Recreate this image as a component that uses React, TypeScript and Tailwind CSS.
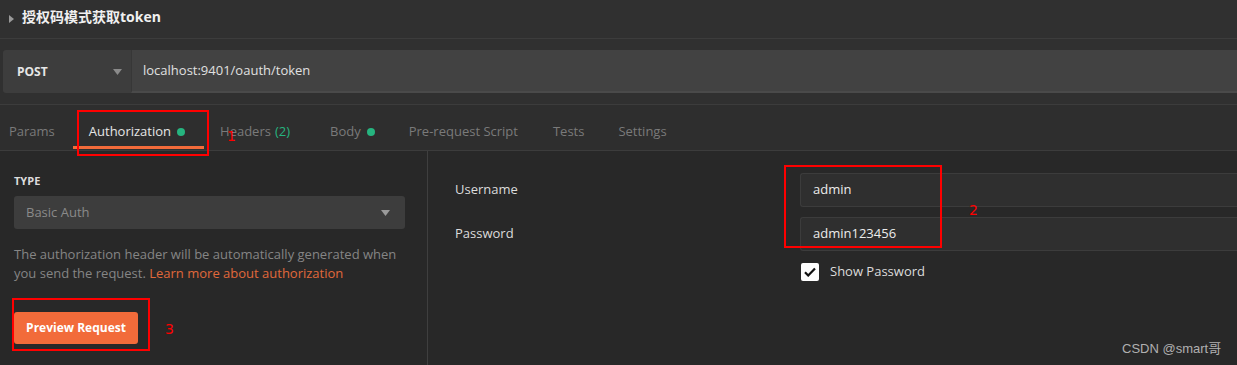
import React from "react";

const font = { fontFamily: '"Open Sans", "Noto Sans CJK SC", sans-serif' };
const markFont = { fontFamily: '"DejaVu Sans", sans-serif' };

function Caret({ className = "" }: { className?: string }) {
  return (
    <svg width="9" height="6" viewBox="0 0 9 6" className={className}>
      <path d="M0 0h9L4.5 6z" fill="currentColor" />
    </svg>
  );
}

function Tab({ label, active, dot, count }: { label: string; active?: boolean; dot?: boolean; count?: string }) {
  return (
    <div className="relative flex h-full items-center">
      <span className={active ? "text-[#e6e6e6]" : "text-[#7a7a7a]"}>{label}</span>
      {count && <span className="ml-1 text-[#26b47f]">{count}</span>}
      {dot && <span className="ml-[6px] h-[8px] w-[8px] rounded-full bg-[#26b47f]" />}
      {active && <div className="absolute -left-[16px] -right-[19px] bottom-[1px] h-[3px] bg-[#f26b3a]" />}
    </div>
  );
}

export default function App() {
  return (
    <div className="relative h-[365px] w-[1237px] overflow-hidden bg-[#282828] text-[13px]" style={font}>
      {/* title */}
      <div className="flex h-[39px] items-center border-b border-[#3c3c3c] bg-[#303030] pl-[9px]">
        <svg width="5" height="8" viewBox="0 0 5 8" className="mr-[8px] text-[#9a9a9a]">
          <path d="M0 0l5 4-5 4z" fill="currentColor" />
        </svg>
        <span className="pb-[6px] text-[14px] font-bold text-[#f0f0f0]">授权码模式获取token</span>
      </div>

      {/* request bar */}
      <div className="border-b border-[#3c3c3c] bg-[#303030] pb-[11px] pt-[11px]">
        <div className="ml-[3px] flex h-[43px]">
          <div className="flex w-[128px] items-center justify-between rounded-l-[3px] bg-[#3d3d3d] pl-[14px] pr-[9px]">
            <span className="text-[12px] font-bold text-[#e6e6e6]">POST</span>
            <Caret className="text-[#8a8a8a]" />
          </div>
          <div className="flex flex-1 items-center border-l border-[#373737] border-b-[2px] border-b-[#4a4a4a] bg-[#424242] pl-[11px] text-[#e0e0e0]">
            localhost:9401/oauth/token
          </div>
        </div>
      </div>

      {/* tabs */}
      <div className="flex h-[46px] items-center gap-[34px] border-b border-[#3c3c3c] bg-[#2e2e2e] pl-[9px] pt-[8px]">
        <Tab label="Params" />
        <Tab label="Authorization" active dot />
        <div className="ml-[1px] h-full"><Tab label="Headers" count="(2)" /></div>
        <div className="ml-[6px] h-full"><Tab label="Body" dot /></div>
        <Tab label="Pre-request Script" />
        <div className="ml-[1px] h-full"><Tab label="Tests" /></div>
        <Tab label="Settings" />
      </div>

      {/* content */}
      <div className="flex h-[215px]">
        <div className="w-[428px] shrink-0 border-r border-[#3f3f3f] pl-[14px] pr-[22px] pt-[23px]">
          <div className="text-[11px] font-bold leading-[14px] text-[#dcdcdc]">TYPE</div>
          <div className="mt-[8px] flex h-[33px] items-center justify-between rounded-[3px] bg-[#3d3d3d] pl-[12px] pr-[15px] text-[#8a8a8a]">
            <span>Basic Auth</span>
            <Caret className="text-[#9a9a9a]" />
          </div>
          <p className="mt-[16px] leading-[19px] text-[#858585]">
            The authorization header will be automatically generated when you send the request.{" "}
            <span className="text-[#e0683b]">Learn more about authorization</span>
          </p>
          <button className="mt-[29px] h-[32px] w-[124px] rounded-[3px] bg-[#f26b3a] text-[12px] font-bold text-white">
            Preview Request
          </button>
        </div>

        <div className="flex-1 pt-[22px]">
          <div className="flex h-[34px] items-center">
            <span className="w-[372px] pl-[27px] text-[#dcdcdc]">Username</span>
            <div className="flex h-full flex-1 items-center rounded-l-[3px] border border-r-0 border-[#3c3c3c] bg-[#2f2f2f] pl-[12px] text-[#ececec]">
              admin
            </div>
          </div>
          <div className="mt-[10px] flex h-[34px] items-center">
            <span className="w-[372px] pl-[27px] text-[#dcdcdc]">Password</span>
            <div className="flex h-full flex-1 items-center rounded-l-[3px] border border-r-0 border-[#3c3c3c] bg-[#2f2f2f] pl-[12px] text-[#ececec]">
              admin123456
            </div>
          </div>
          <div className="mt-[11px] flex items-center pl-[373px]">
            <span className="flex h-[18px] w-[18px] items-center justify-center rounded-[2px] bg-white">
              <svg width="12" height="10" viewBox="0 0 12 10">
                <path d="M1 5.2l3.2 3.3L11 1.5" fill="none" stroke="#111" strokeWidth="2.2" />
              </svg>
            </span>
            <span className="ml-[11px] text-[#dcdcdc]">Show Password</span>
          </div>
        </div>
      </div>

      {/* annotations */}
      <div className="absolute left-[77px] top-[110px] h-[46px] w-[132px] border-2 border-[#ff0000]" />
      <span className="absolute left-[227px] top-[129px] text-[14px] leading-none text-[#ff0000]" style={markFont}>1</span>
      <div className="absolute left-[784px] top-[165px] h-[83px] w-[158px] border-2 border-[#ff0000]" />
      <span className="absolute left-[969px] top-[203px] text-[14px] leading-none text-[#ff0000]" style={markFont}>2</span>
      <div className="absolute left-[12px] top-[298px] h-[53px] w-[138px] border-2 border-[#ff0000]" />
      <span className="absolute left-[165px] top-[322px] text-[14px] leading-none text-[#ff0000]" style={markFont}>3</span>

      <span className="absolute left-[1122px] top-[339px] text-[13px] text-[#b0b0b0]" style={{ fontFamily: '"Liberation Sans", "Noto Sans CJK SC", sans-serif' }}>
        CSDN @smart哥
      </span>
    </div>
  );
}
